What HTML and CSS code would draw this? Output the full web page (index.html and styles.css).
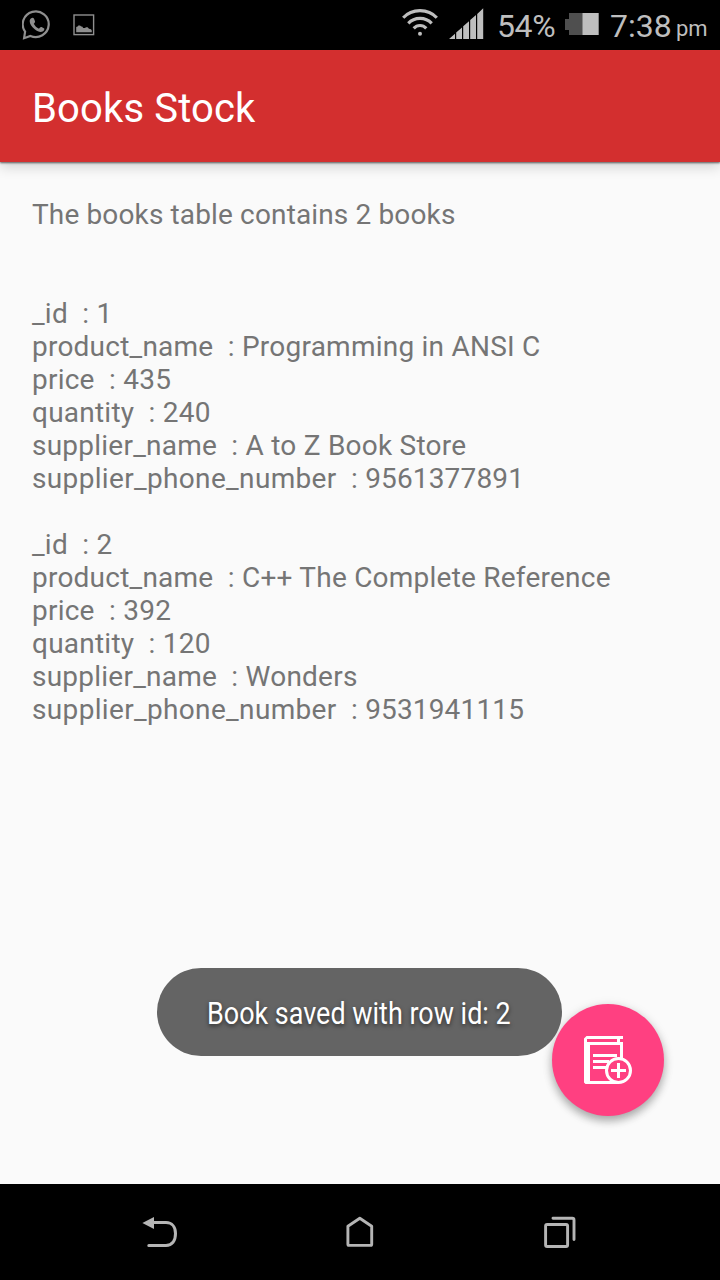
FILE: index.html
```html
<!DOCTYPE html>
<html lang="en">
<head>
<meta charset="utf-8">
<title>Books Stock</title>
<link rel="stylesheet" href="styles.css">
</head>
<body>
<div class="screen">
  <div class="status">
    <div class="notifications">
      <svg width="30" height="32" viewBox="0 0 30 32">
        <path d="M3.1 22.6 A13 12.8 0 1 1 8.4 26.9 L2.1 29.2 Z" fill="none" stroke="#8f8f8f" stroke-width="2.2" stroke-linejoin="miter"/>
        <path d="M9.2 9.3 C10.3 8.5 11.5 8.6 12 9.8 L13 12.2 C13.3 13.3 12.5 13.8 11.8 14.7 C13 17 14.5 18.6 17 19.7 C18 18.4 18.6 17.6 19.6 18.1 L22.2 19.5 C22.8 20 21.9 22 20.6 22.6 C18.7 23.5 15.8 22.9 12.7 20.3 C9.5 17.5 7.7 14.8 7.7 12.3 C7.7 10.9 8.3 9.9 9.2 9.3 Z" fill="#8f8f8f"/>
      </svg>
      <svg width="22" height="22" viewBox="0 0 22 22">
        <rect x="1" y="1" width="19.6" height="19.6" fill="none" stroke="#8f8f8f" stroke-width="1.4"/>
        <path d="M3.2 18.2 V13 L4.6 12.4 L5.4 11.4 H7 L8.2 12.4 L9.2 12.6 L10.2 14 L12 14 L13 13.2 H14.6 L16 14.8 L18 15.2 L18.8 16.4 V18.2 Z" fill="#8f8f8f"/>
      </svg>
    </div>
    <div class="indicators">
      <svg width="36" height="28" viewBox="0 0 36 28" fill="none" stroke="#bebebe" stroke-width="3.1">
        <path d="M1.2 9.8 C9.8 0.2 26.2 0.2 34.8 9.8"/>
        <path d="M6.3 15.4 C12.4 8.7 23.6 8.7 29.7 15.4"/>
        <path d="M11.7 20.4 C15.2 16.5 20.8 16.5 24.3 20.4"/>
        <circle cx="18" cy="25.8" r="2" fill="#bebebe" stroke="none"/>
      </svg>
      <svg class="signal" width="35" height="31" viewBox="0 0 35 31">
        <path d="M0 31 L6 25.8 V31Z M7.2 31 V24.5 L13 19.4 V31Z M14.2 31 V18.3 L20 13.2 V31Z M21.2 31 V12.1 L27 7 V31Z M28.2 31 V5.9 L34.2 0.3 V31Z" fill="#bebebe"/>
      </svg>
      <span class="percent">54%</span>
      <svg class="battery" width="34" height="22" viewBox="0 0 34 22">
        <path d="M4 0 H18 V22 H4 V17 H0 V6 H4Z" fill="#4f4f4f"/>
        <path d="M17.5 0 H33.7 V22 H17.5Z" fill="#bebebe"/>
      </svg>
      <span class="clock">7:38</span>
      <span class="meridiem">pm</span>
    </div>
  </div>
  <header class="appbar"><h1 class="title">Books Stock</h1></header>
  <main class="content">
    <div class="line summary">The books table contains 2 books</div>
    <section class="book">
      <div class="line">_id  : 1</div>
      <div class="line">product_name  : Programming in ANSI C</div>
      <div class="line">price  : 435</div>
      <div class="line">quantity  : 240</div>
      <div class="line">supplier_name  : A to Z Book Store</div>
      <div class="line"><span class="wide">supplier_phone_number</span>  : <span class="digits">9561377891</span></div>
    </section>
    <section class="book">
      <div class="line">_id  : 2</div>
      <div class="line">product_name  : C++ The Complete Reference</div>
      <div class="line">price  : 392</div>
      <div class="line">quantity  : 120</div>
      <div class="line">supplier_name  : Wonders</div>
      <div class="line"><span class="wide">supplier_phone_number</span>  : <span class="digits">9531941115</span></div>
    </section>
  </main>
  <button class="fab" aria-label="Add book">
    <svg width="48" height="48" viewBox="0 0 48 48" fill="none" stroke="#fff" stroke-width="3">
      <path d="M39 0 V3 H36 V6 H39 V9 H6 V48 H1.5 L0 46.5 V2.5 L2.5 0Z" fill="#fff" stroke="none"/>
      <path d="M3 3 H33 V6 H3Z" fill="#ff4081" stroke="none"/>
      <path d="M37.5 8 V23 M5 46.5 H35"/>
      <path d="M9 19.5 H33 M9 25.5 H25 M9 31.5 H22"/>
      <circle cx="34.5" cy="34.5" r="12" fill="#ff4081"/>
      <path d="M34.5 27 V42 M27 34.5 H42"/>
    </svg>
  </button>
  <div class="toast"><span class="message">Book saved with row id: 2</span></div>
  <nav class="navbar">
    <svg width="36" height="32" viewBox="0 0 36 32" fill="none" stroke="#b5b5b5" stroke-width="3" stroke-linecap="round">
      <path d="M10 6.6 H24 C30 6.6 33.5 11 33.5 17.5 C33.5 25 30 29.4 24 29.4 H6.8"/>
      <path d="M0.4 7 L12 1 V13Z" fill="#b5b5b5" stroke="none"/>
    </svg>
    <svg width="28" height="32" viewBox="0 0 28 32" fill="none" stroke="#b5b5b5" stroke-width="2.9" stroke-linejoin="round">
      <path d="M1.9 10.2 L13.8 2.3 L25.7 10.2 V28.3 Q25.7 29.4 24.6 29.4 H3 Q1.9 29.4 1.9 28.3Z"/>
    </svg>
    <svg width="32" height="32" viewBox="0 0 32 32" fill="none" stroke="#b5b5b5" stroke-width="2.9" stroke-linecap="round">
      <rect x="1.6" y="8.5" width="22" height="22" rx="1.5"/>
      <path d="M9 2.3 H28.3 Q30 2.3 30 4 V23.5"/>
    </svg>
  </nav>
</div>
</body>
</html>
```
FILE: styles.css
```css
body {
  margin: 0;
}
.screen {
  position: relative;
  display: flex;
  flex-direction: column;
  width: 720px;
  height: 1280px;
  overflow: hidden;
  background: #fafafa;
  font-family: Roboto, "Liberation Sans", sans-serif;
}
svg {
  display: block;
  flex: none;
}
.status {
  display: flex;
  justify-content: space-between;
  height: 50px;
  background: #000;
  color: #bebebe;
}
.notifications {
  display: flex;
  align-items: center;
  gap: 21px;
  padding-left: 22px;
}
.indicators {
  display: flex;
  align-items: flex-start;
  width: 318px;
  padding-top: 8px;
}
.signal {
  margin-left: 11px;
}
.percent {
  width: 67px;
  padding-left: 13px;
  font-size: 32px;
  line-height: 37px;
  letter-spacing: -0.4px;
  box-sizing: border-box;
  margin-right: 13.5px;
}
.signal, .percent, .battery, .clock, .meridiem {
  flex: none;
}
.battery {
  margin-top: 5px;
}
.clock {
  width: 66px;
  margin-left: 11.5px;
  font-size: 32px;
  line-height: 37px;
}
.meridiem {
  padding-top: 7px;
  font-size: 22px;
  line-height: 28px;
}
.appbar {
  display: flex;
  align-items: center;
  box-sizing: border-box;
  height: 112px;
  padding: 6px 0 0 32px;
  background: #d32f2f;
  box-shadow: 0 1px 2px rgba(0, 0, 0, 0.6), 0 5px 12px rgba(0, 0, 0, 0.16);
}
.title {
  margin: 0;
  color: #fff;
  font-size: 40px;
  font-weight: 400;
  line-height: 48px;
  letter-spacing: 0.15px;
}
.content {
  flex: 1;
  padding: 36px 32px 0;
  color: #757575;
  font-size: 28px;
  line-height: 33px;
}
.line {
  white-space: pre;
  letter-spacing: 0.23px;
}
.line.summary {
  margin-bottom: 66px;
  letter-spacing: 0.14px;
}
.wide {
  letter-spacing: 0.34px;
}
.digits {
  letter-spacing: 0.15px;
}
.book {
  margin-bottom: 33px;
}
.fab {
  position: absolute;
  left: 552px;
  top: 1004px;
  display: flex;
  align-items: center;
  justify-content: center;
  width: 112px;
  height: 112px;
  padding: 0;
  border: 0;
  border-radius: 50%;
  background: #ff4081;
  box-shadow: 0 5px 8px rgba(0, 0, 0, 0.28), 0 2px 12px rgba(0, 0, 0, 0.1);
}
.toast {
  position: absolute;
  left: 157px;
  top: 968px;
  display: flex;
  align-items: center;
  box-sizing: border-box;
  width: 405px;
  height: 88px;
  padding: 2px 0 0 50px;
  border-radius: 44px;
  background: #646464;
}
.message {
  color: #fff;
  font-size: 32px;
  line-height: 38px;
  white-space: nowrap;
  transform: scaleX(0.842);
  transform-origin: left;
  text-shadow: 0 2px 5px rgba(0, 0, 0, 0.55);
}
.navbar {
  display: grid;
  grid-template-columns: repeat(3, 200px);
  justify-content: center;
  justify-items: center;
  align-items: center;
  height: 96px;
  background: #000;
}
```
